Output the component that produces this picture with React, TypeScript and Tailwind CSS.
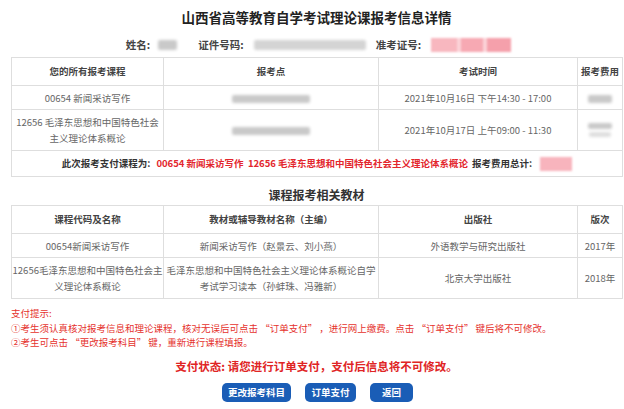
import React from "react";

const Blur = ({ w, h = 8, className = "" }: { w: number; h?: number; className?: string }) => (
  <span
    className={"inline-block align-middle bg-[#c9c9c9] blur-[1.5px] rounded-[2px] " + className}
    style={{ width: w, height: h }}
  />
);

const th = "border border-[#dedede] font-bold text-[#444] text-[9.5px] text-center align-middle px-0";
const td = "border border-[#dedede] text-[#666] text-[9.5px] text-center align-middle px-0 leading-[14px]";

export default function App() {
  return (
    <div className="w-[624px] h-[409px] bg-white pl-[11px] pr-[2px] overflow-hidden font-['Noto_Sans_CJK_SC','Noto_Sans',sans-serif] text-[#333]">
      <h1 className="pt-[7px] text-center text-[13.5px] leading-[20px] font-bold text-[#222]">
        山西省高等教育自学考试理论课报考信息详情
      </h1>

      <div className="mt-[10px] flex h-[16px] items-center justify-center text-[10.5px] font-bold text-[#444] pl-[4px]">
        <span>姓名:</span>
        <Blur w={19} h={10} className="ml-[8px]" />
        <span className="ml-[21px]">证件号码:</span>
        <Blur w={112} h={10} className="ml-[10px] bg-[#d4d4d4]" />
        <span className="ml-[10px]">准考证号:</span>
        <span className="ml-[10px] flex h-[14px] w-[80px] blur-[1px]">
          <span className="h-full w-[26px] bg-[#f8b7bf]" />
          <span className="h-full w-[4px] bg-[#fbd3d8]" />
          <span className="h-full w-[22px] bg-[#f7a9b3]" />
          <span className="h-full w-[4px] bg-[#fbd3d8]" />
          <span className="h-full w-[24px] bg-[#f5a0ab]" />
        </span>
      </div>

      <table className="mt-[4px] w-[611px] table-fixed border-collapse">
        <colgroup>
          <col className="w-[152px]" />
          <col className="w-[215px]" />
          <col className="w-[199px]" />
          <col className="w-[45px]" />
        </colgroup>
        <tbody>
          <tr className="h-[28px]">
            <th className={th}>您的所有报考课程</th>
            <th className={th}>报考点</th>
            <th className={th}>考试时间</th>
            <th className={th}>报考费用</th>
          </tr>
          <tr className="h-[24px]">
            <td className={td}>00654 新闻采访写作</td>
            <td className={td}>
              <Blur w={78} />
            </td>
            <td className={td}>2021年10月16日 下午14:30 - 17:00</td>
            <td className={td}>
              <Blur w={24} />
            </td>
          </tr>
          <tr className="h-[41px]">
            <td className={td + " leading-[16px]"}>
              12656 毛泽东思想和中国特色社会
              <br />
              主义理论体系概论
            </td>
            <td className={td}>
              <Blur w={78} />
            </td>
            <td className={td}>2021年10月17日 上午09:00 - 11:30</td>
            <td className={td}>
              <span className="flex flex-col items-center gap-[3px]">
                <Blur w={24} h={6} />
                <Blur w={22} h={5} className="bg-[#dedede]" />
              </span>
            </td>
          </tr>
          <tr className="h-[26px]">
            <td colSpan={4} className="border border-[#dedede] text-center align-middle text-[9.5px] font-bold">
              <span className="inline-flex items-center">
                <span className="text-[#333]">此次报考支付课程为:</span>
                <span className="ml-[6px] text-[#e3262d]">00654 新闻采访写作&nbsp;&nbsp;12656 毛泽东思想和中国特色社会主义理论体系概论</span>
                <span className="ml-[4px] text-[#333]">报考费用总计:</span>
                <span className="ml-[8px] inline-block h-[14px] w-[32px] bg-[#f8b4bd] blur-[0.8px]" />
              </span>
            </td>
          </tr>
        </tbody>
      </table>

      <h2 className="mt-[9px] mb-[2px] text-center text-[12px] leading-[17px] font-bold text-[#333]">
        课程报考相关教材
      </h2>

      <table className="w-[611px] table-fixed border-collapse">
        <colgroup>
          <col className="w-[152px]" />
          <col className="w-[215px]" />
          <col className="w-[199px]" />
          <col className="w-[45px]" />
        </colgroup>
        <tbody>
          <tr className="h-[28px]">
            <th className={th}>课程代码及名称</th>
            <th className={th}>教材或辅导教材名称（主编）</th>
            <th className={th}>出版社</th>
            <th className={th}>版次</th>
          </tr>
          <tr className="h-[24px]">
            <td className={td}>00654新闻采访写作</td>
            <td className={td}>新闻采访写作（赵景云、刘小燕）</td>
            <td className={td}>外语教学与研究出版社</td>
            <td className={td}>2017年</td>
          </tr>
          <tr className="h-[41px]">
            <td className={td + " leading-[16px] whitespace-nowrap"}>
              12656毛泽东思想和中国特色社会主
              <br />
              义理论体系概论
            </td>
            <td className={td + " leading-[16px] whitespace-nowrap"}>
              毛泽东思想和中国特色社会主义理论体系概论自学
              <br />
              考试学习读本（孙蚌珠、冯雅新）
            </td>
            <td className={td}>北京大学出版社</td>
            <td className={td}>2018年</td>
          </tr>
        </tbody>
      </table>

      <div className="mt-[7px] text-[9.5px] leading-[14.5px] text-[#e5322d]">
        <p>支付提示:</p>
        <p>①考生须认真核对报考信息和理论课程，核对无误后可点击 “订单支付” ，进行网上缴费。点击 “订单支付” 键后将不可修改。</p>
        <p>②考生可点击 “更改报考科目” 键，重新进行课程填报。</p>
      </div>

      <p className="mt-[8px] text-center text-[11.5px] leading-[17px] font-bold text-[#e02424]">
        支付状态: 请您进行订单支付，支付后信息将不可修改。
      </p>

      <div className="mt-[8px] flex justify-center gap-[14px] pl-[2px]">
        <button className="h-[19px] w-[69px] rounded-[5px] bg-[#1a5db6] text-[9.5px] font-bold text-white">
          更改报考科目
        </button>
        <button className="h-[19px] w-[51px] rounded-[5px] bg-[#1a5db6] text-[9.5px] font-bold text-white">
          订单支付
        </button>
        <button className="h-[19px] w-[43px] rounded-[5px] bg-[#1a5db6] text-[9.5px] font-bold text-white">
          返回
        </button>
      </div>
    </div>
  );
}
